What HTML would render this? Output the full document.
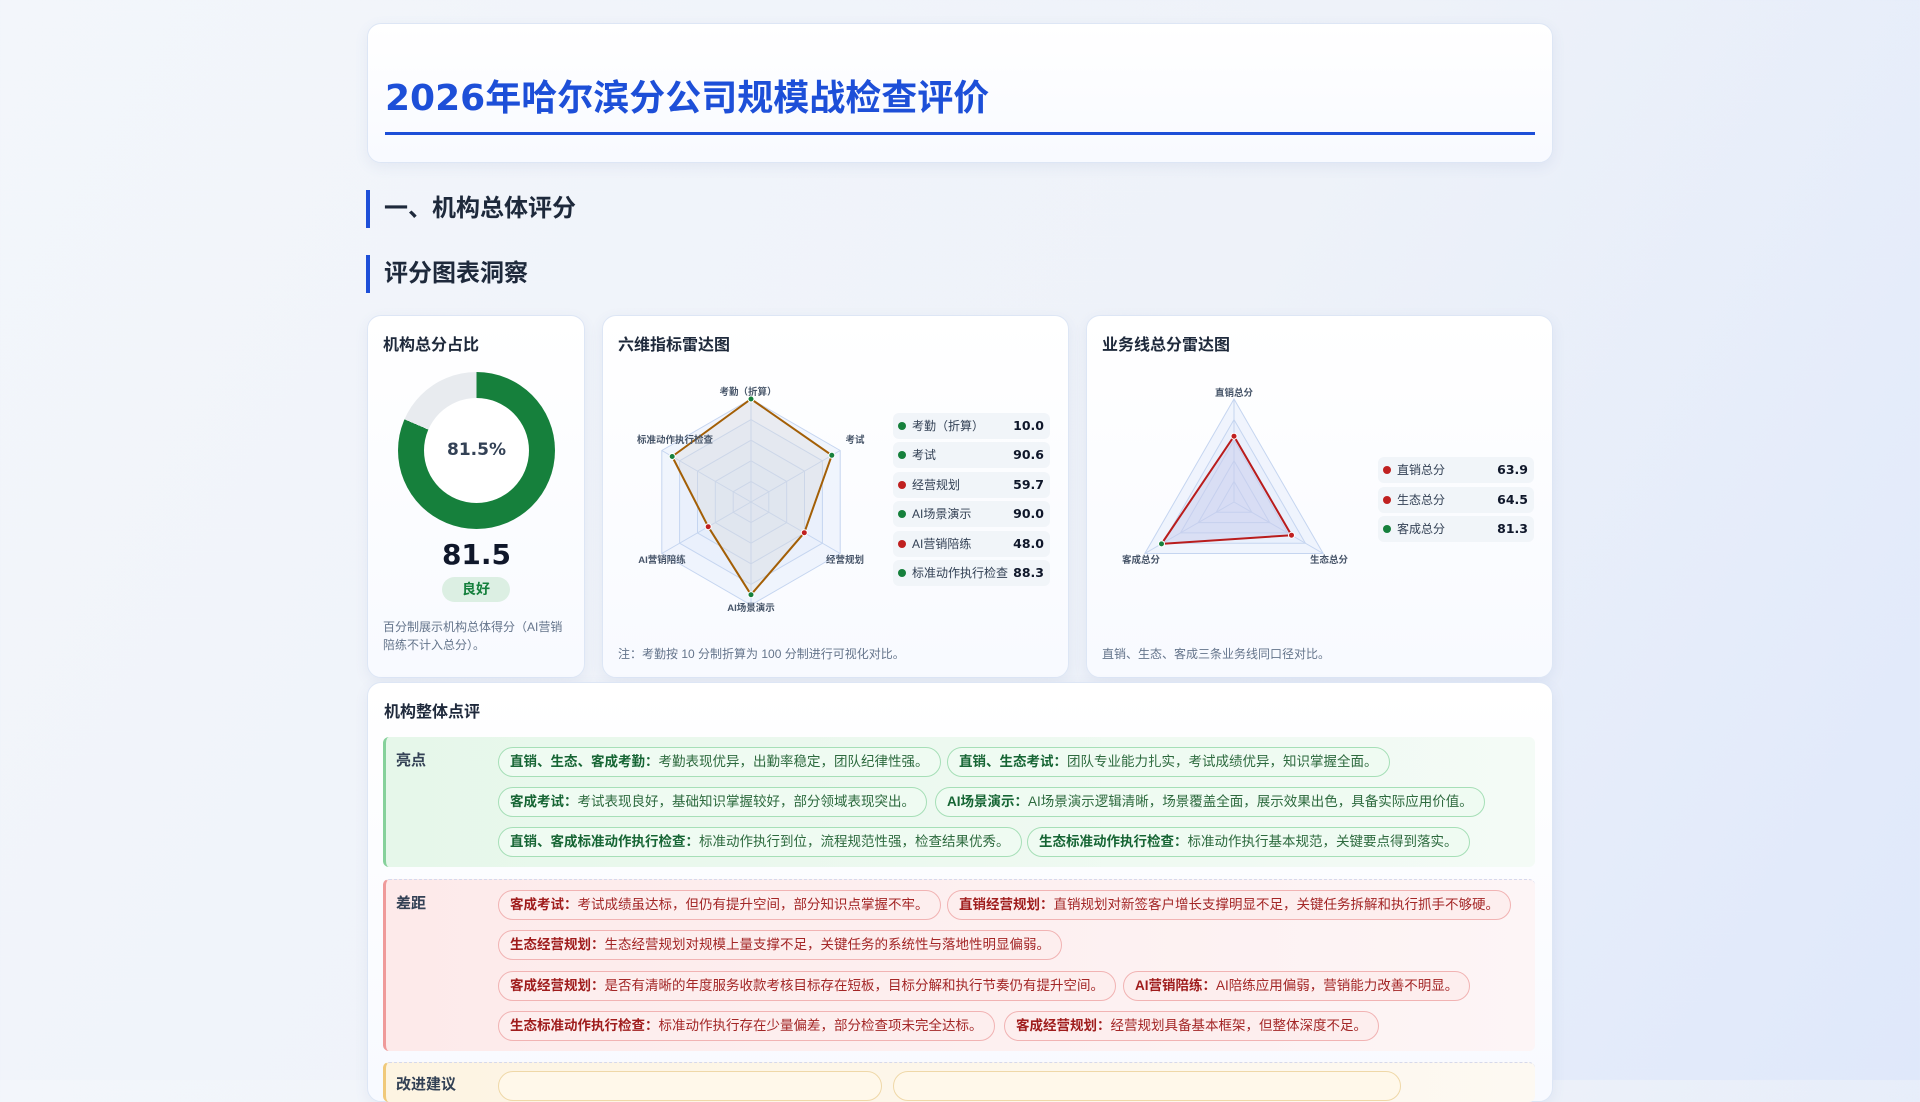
<!DOCTYPE html>
<html><head><meta charset="utf-8"><style>
*{box-sizing:border-box;margin:0;padding:0}
body{width:1920px;height:1080px;overflow:hidden;font-family:"Liberation Sans","Noto Sans CJK SC",sans-serif;background:linear-gradient(120deg,#f3f6fb 0%,#eef2f9 55%,#dfe8fa 100%);position:relative;color:#1e293b}
.card{position:absolute;background:linear-gradient(180deg,#fff,#f8faff);border:1px solid #dde6f5;border-radius:14px;box-shadow:0 4px 14px rgba(60,90,150,.08)}
.abs{position:absolute;white-space:nowrap}
h1{position:absolute;left:385px;top:69px;font-size:36px;color:#1d4fd8;font-weight:700;font-family:"DejaVu Sans","Noto Sans CJK SC",sans-serif}
.uline{position:absolute;left:385px;top:132px;width:1150px;height:3px;background:#1d4fd8}
.sec{position:absolute;left:366px;height:38px;border-left:4px solid #1d4fd8;padding-left:14px;font-size:24px;font-weight:700;line-height:38px;color:#1e293b}
.ct{position:absolute;font-size:16px;font-weight:700;color:#1e293b}
.note{position:absolute;font-size:12px;color:#64748b;line-height:18px}
.lg{position:absolute;height:26px;background:#f1f5f9;border-radius:6px;font-size:12px;color:#334155;line-height:26px}
.lg i{position:absolute;left:5px;top:9px;width:8px;height:8px;border-radius:50%}
.lg span{position:absolute;left:19px}
.lg b{position:absolute;right:6px;font-size:12.5px;color:#0f172a;font-family:"DejaVu Sans",sans-serif}
.blk{position:absolute;left:383px;width:1152px;border-radius:6px}
.lab{position:absolute;left:10px;top:12px;font-size:15px;font-weight:700;color:#334155}
.pill{position:absolute;height:30px;border-radius:15px;font-size:13.5px;line-height:28px;padding:0 11px;white-space:nowrap}
.g .pill{background:#effbf2;border:1px solid #a6dfb7;color:#2d6a3e}
.g .pill b{color:#166534}
.r .pill{background:#fdeeee;border:1px solid #f1b3b3;color:#a32626}
.r .pill b{color:#9f1c1c}
.y .pill{background:#fff8ea;border:1px solid #efd8a8;color:#8a5a12}
</style></head><body>
<div class="card" style="left:367px;top:23px;width:1186px;height:140px"></div>
<h1>2026年哈尔滨分公司规模战检查评价</h1>
<div class="uline"></div>
<div class="sec" style="top:190px">一、机构总体评分</div>
<div class="sec" style="top:255px">评分图表洞察</div>

<div class="card" style="left:367px;top:315px;width:218px;height:363px"></div>
<div class="card" style="left:602px;top:315px;width:467px;height:363px"></div>
<div class="card" style="left:1086px;top:315px;width:467px;height:363px"></div>

<div class="ct" style="left:383px;top:331px">机构总分占比</div>
<div class="ct" style="left:618px;top:331px">六维指标雷达图</div>
<div class="ct" style="left:1102px;top:331px">业务线总分雷达图</div>

<div class="abs" style="left:398px;top:372px;width:157px;height:157px;border-radius:50%;background:conic-gradient(#16803c 0 81.5%,#e8ebef 81.5% 100%)"></div>
<div class="abs" style="left:424px;top:398px;width:105px;height:105px;border-radius:50%;background:#fff;text-align:center;line-height:105px;font-size:17px;font-weight:700;color:#334155;font-family:'DejaVu Sans',sans-serif">81.5%</div>
<div class="abs" style="left:398px;top:538px;width:157px;text-align:center;font-size:28px;font-weight:700;color:#0f172a;font-family:'DejaVu Sans',sans-serif">81.5</div>
<div class="abs" style="left:442px;top:577px;width:68px;height:25px;border-radius:13px;background:#dcefe3;color:#15803d;text-align:center;line-height:25px;font-size:14px;font-weight:700">良好</div>
<div class="note" style="left:383px;top:618px;width:190px;white-space:normal">百分制展示机构总体得分（AI营销陪练不计入总分）。</div>
<div class="note" style="left:618px;top:645px">注：考勤按 10 分制折算为 100 分制进行可视化对比。</div>
<div class="note" style="left:1102px;top:645px">直销、生态、客成三条业务线同口径对比。</div>

<svg class="abs" style="left:0;top:0" width="1920" height="1080" font-family="Liberation Sans,Noto Sans CJK SC,sans-serif">
<g fill="#e3ecfb" fill-opacity=".45" stroke="#c5d5f0" stroke-width="1">
<polygon points="751,399 840.2,450.5 840.2,553.5 751,605 661.8,553.5 661.8,450.5"/>
<polygon points="751,419.6 822.4,460.8 822.4,543.2 751,584.4 679.6,543.2 679.6,460.8"/>
<polygon points="751,440.2 804.5,471.1 804.5,532.9 751,563.8 697.5,532.9 697.5,471.1"/>
<polygon points="751,460.8 786.7,481.4 786.7,522.6 751,543.2 715.3,522.6 715.3,481.4"/>
<polygon points="751,481.4 768.8,491.7 768.8,512.3 751,522.6 733.2,512.3 733.2,491.7"/>
<line x1="751" y1="502" x2="751" y2="399"/><line x1="751" y1="502" x2="840.2" y2="450.5"/><line x1="751" y1="502" x2="840.2" y2="553.5"/><line x1="751" y1="502" x2="751" y2="605"/><line x1="751" y1="502" x2="661.8" y2="553.5"/><line x1="751" y1="502" x2="661.8" y2="450.5"/>
</g>
<polygon points="751,399 831.8,455.3 804.3,532.7 751,594.7 708.2,526.7 672.2,456.5" fill="#d9d9d9" fill-opacity=".35" stroke="#a35f06" stroke-width="2"/>
<g stroke="#fff" stroke-width="1"><circle cx="751" cy="399" r="3" fill="#16803c"/><circle cx="831.8" cy="455.3" r="3" fill="#16803c"/><circle cx="804.3" cy="532.7" r="3" fill="#c02020"/><circle cx="751" cy="594.7" r="3" fill="#16803c"/><circle cx="708.2" cy="526.7" r="3" fill="#c02020"/><circle cx="672.2" cy="456.5" r="3" fill="#16803c"/></g>
<g font-size="9.5" font-weight="700" fill="#475569" text-anchor="middle">
<text x="748" y="395">考勤（折算）</text><text x="855" y="443">考试</text><text x="845" y="563">经营规划</text><text x="751" y="611">AI场景演示</text><text x="662" y="563">AI营销陪练</text><text x="675" y="443">标准动作执行检查</text>
<text x="1234" y="396">直销总分</text><text x="1329" y="563">生态总分</text><text x="1141" y="563">客成总分</text>
</g>
<g fill="#e3ecfb" fill-opacity=".5" stroke="#c5d5f0">
<polygon points="1234,399 1323.2,553.5 1144.8,553.5"/>
<polygon points="1234,419.6 1305.4,543.2 1162.6,543.2"/>
<polygon points="1234,440.2 1287.5,532.9 1180.5,532.9"/>
<polygon points="1234,460.8 1269.7,522.6 1198.3,522.6"/>
<polygon points="1234,481.4 1251.8,512.3 1216.2,512.3"/>
<line x1="1234" y1="502" x2="1234" y2="399"/><line x1="1234" y1="502" x2="1323.2" y2="553.5"/><line x1="1234" y1="502" x2="1144.8" y2="553.5"/>
</g>
<polygon points="1234,436.2 1291.5,535.2 1161.5,543.9" fill="#c7c9ec" fill-opacity=".45" stroke="#b91c1c" stroke-width="2"/>
<g stroke="#fff"><circle cx="1234" cy="436.2" r="3" fill="#c02020"/><circle cx="1291.5" cy="535.2" r="3" fill="#c02020"/><circle cx="1161.5" cy="543.9" r="3" fill="#16803c"/></g>
</svg>

<div class="lg" style="left:893px;top:413px;width:157px"><i style="background:#16803c"></i><span>考勤（折算）</span><b>10.0</b></div>
<div class="lg" style="left:893px;top:442px;width:157px"><i style="background:#16803c"></i><span>考试</span><b>90.6</b></div>
<div class="lg" style="left:893px;top:472px;width:157px"><i style="background:#c02020"></i><span>经营规划</span><b>59.7</b></div>
<div class="lg" style="left:893px;top:501px;width:157px"><i style="background:#16803c"></i><span>AI场景演示</span><b>90.0</b></div>
<div class="lg" style="left:893px;top:531px;width:157px"><i style="background:#c02020"></i><span>AI营销陪练</span><b>48.0</b></div>
<div class="lg" style="left:893px;top:560px;width:157px"><i style="background:#16803c"></i><span>标准动作执行检查</span><b>88.3</b></div>
<div class="lg" style="left:1378px;top:457px;width:156px"><i style="background:#c02020"></i><span>直销总分</span><b>63.9</b></div>
<div class="lg" style="left:1378px;top:487px;width:156px"><i style="background:#c02020"></i><span>生态总分</span><b>64.5</b></div>
<div class="lg" style="left:1378px;top:516px;width:156px"><i style="background:#16803c"></i><span>客成总分</span><b>81.3</b></div>

<div class="card" style="left:367px;top:682px;width:1186px;height:420px"></div>
<div class="ct" style="left:384px;top:698px">机构整体点评</div>

<div class="blk g" style="top:737px;height:130px;border-left:3px solid #86d19b;background:linear-gradient(90deg,#e6f7ea,#f4fbf6)">
<div class="lab">亮点</div>
<div class="pill" style="left:112px;top:10px"><b>直销、生态、客成考勤：</b>考勤表现优异，出勤率稳定，团队纪律性强。</div>
<div class="pill" style="left:561px;top:10px"><b>直销、生态考试：</b>团队专业能力扎实，考试成绩优异，知识掌握全面。</div>
<div class="pill" style="left:112px;top:50px"><b>客成考试：</b>考试表现良好，基础知识掌握较好，部分领域表现突出。</div>
<div class="pill" style="left:549px;top:50px"><b>AI场景演示：</b>AI场景演示逻辑清晰，场景覆盖全面，展示效果出色，具备实际应用价值。</div>
<div class="pill" style="left:112px;top:90px"><b>直销、客成标准动作执行检查：</b>标准动作执行到位，流程规范性强，检查结果优秀。</div>
<div class="pill" style="left:641px;top:90px"><b>生态标准动作执行检查：</b>标准动作执行基本规范，关键要点得到落实。</div>
</div>
<div class="blk r" style="top:879px;height:172px;border-left:3px solid #ef9a9a;border-top:1px dashed #d6d9ec;background:linear-gradient(90deg,#fdeaea,#fdf5f6)">
<div class="lab">差距</div>
<div class="pill" style="left:112px;top:10px"><b>客成考试：</b>考试成绩虽达标，但仍有提升空间，部分知识点掌握不牢。</div>
<div class="pill" style="left:561px;top:10px"><b>直销经营规划：</b>直销规划对新签客户增长支撑明显不足，关键任务拆解和执行抓手不够硬。</div>
<div class="pill" style="left:112px;top:50px"><b>生态经营规划：</b>生态经营规划对规模上量支撑不足，关键任务的系统性与落地性明显偏弱。</div>
<div class="pill" style="left:112px;top:91px"><b>客成经营规划：</b>是否有清晰的年度服务收款考核目标存在短板，目标分解和执行节奏仍有提升空间。</div>
<div class="pill" style="left:737px;top:91px"><b>AI营销陪练：</b>AI陪练应用偏弱，营销能力改善不明显。</div>
<div class="pill" style="left:112px;top:131px"><b>生态标准动作执行检查：</b>标准动作执行存在少量偏差，部分检查项未完全达标。</div>
<div class="pill" style="left:618px;top:131px"><b>客成经营规划：</b>经营规划具备基本框架，但整体深度不足。</div>
</div>
<div class="blk y" style="top:1062px;height:40px;border-left:3px solid #f0c97a;border-top:1px dashed #d6d9ec;background:linear-gradient(90deg,#fdf4e2,#fdf9f2)">
<div class="lab" style="top:10px">改进建议</div>
<div class="pill" style="left:112px;top:8px;width:384px"></div>
<div class="pill" style="left:507px;top:8px;width:508px"></div>
</div>
</body></html>
